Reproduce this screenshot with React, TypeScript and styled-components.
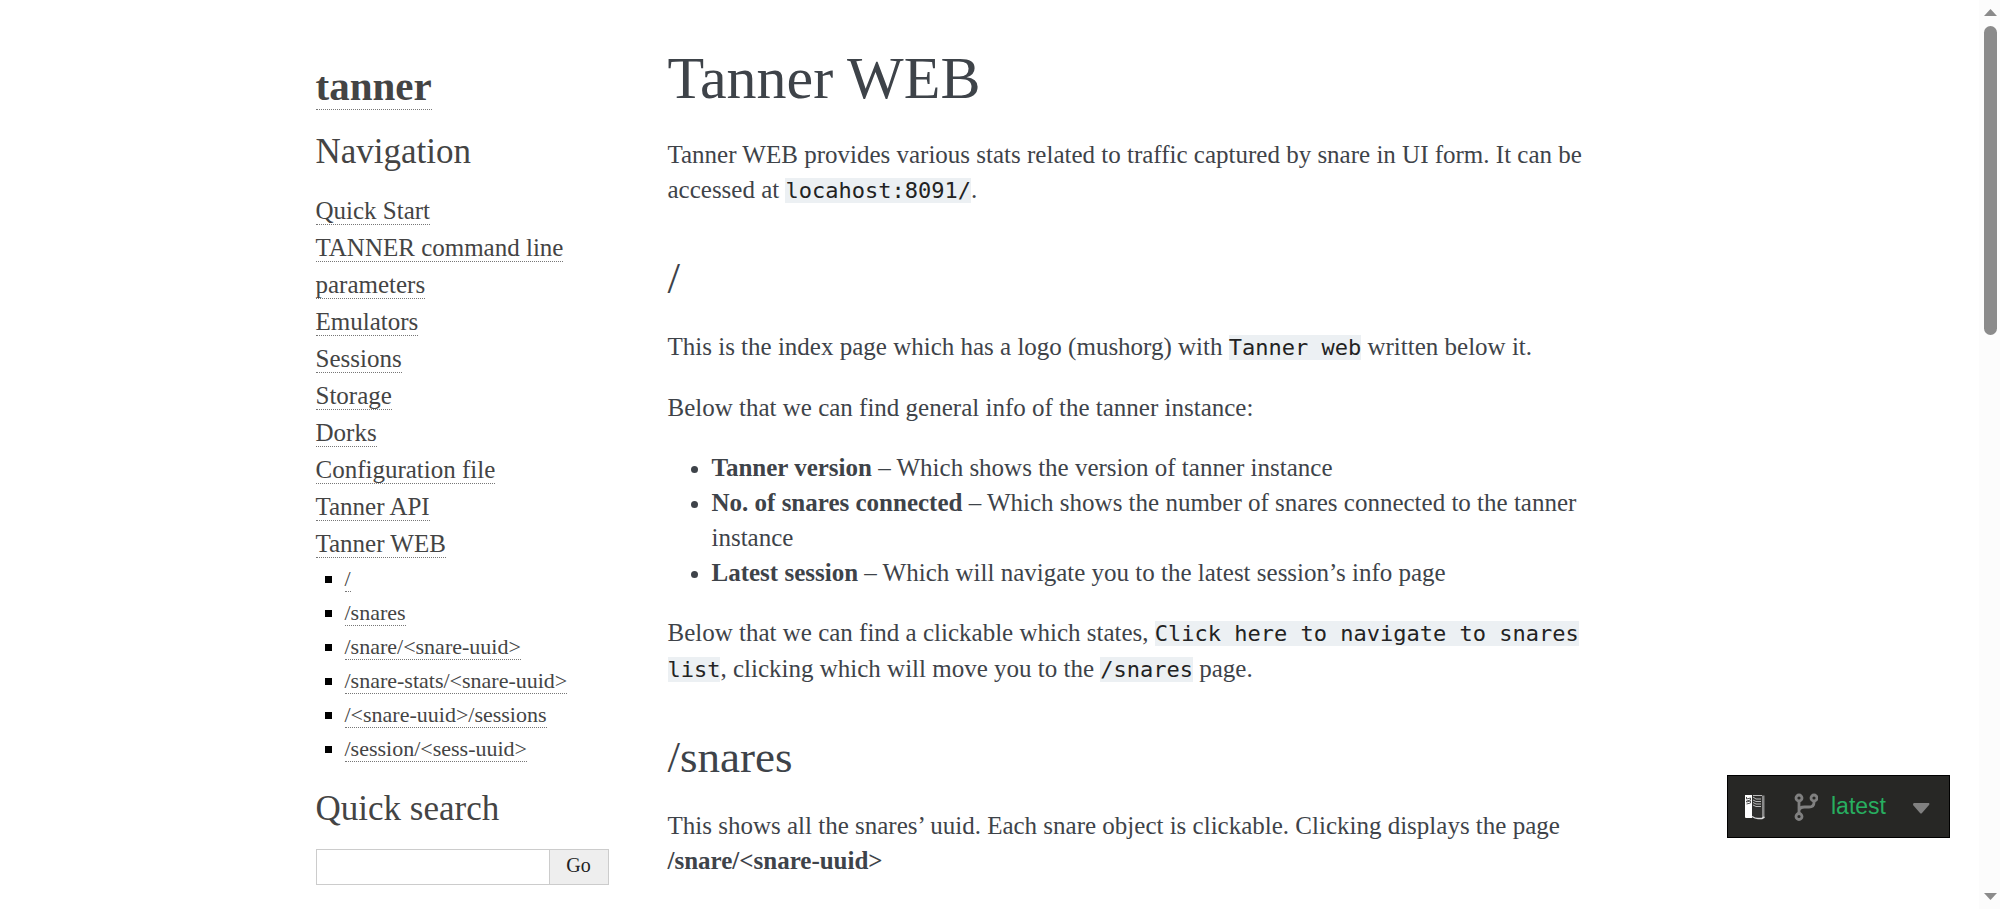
import React from "react";
import styled, { createGlobalStyle } from "styled-components";

const GlobalStyle = createGlobalStyle`
  * { box-sizing: border-box; }
  body {
    margin: 0;
    background: #fff;
    color: #3e4349;
    font-family: "Liberation Serif", Georgia, serif;
    font-size: 25px;
    line-height: 35px;
  }
`;

const Viewport = styled.div`
  height: 100vh;
  overflow: hidden;
  padding-right: 21px;
`;

const Page = styled.div`
  display: flex;
  max-width: 1378px;
  margin: 0 auto;
`;

const Sidebar = styled.aside`
  flex: 0 0 323px;
  padding: 60px 8px 0 15px;
  color: #444;
`;

const SideLink = styled.a`
  color: #444;
  text-decoration: none;
  border-bottom: 1px dotted #777;
`;

const Logo = styled.h1`
  margin: 0 0 17px;
  font-size: 41px;
  line-height: 52px;
  font-weight: 700;
`;

const SideHeading = styled.h3`
  margin: 0 0 17px;
  font-size: 35px;
  line-height: 46px;
  font-weight: 400;
`;

const NavList = styled.ul`
  list-style: none;
  margin: 0;
  padding: 0;
  line-height: 37px;
`;

const SubList = styled.ul`
  list-style: square;
  margin: 0 0 20px;
  padding: 0 0 0 29px;
  color: #000;
  font-size: 22px;
  line-height: 34px;
`;

const SearchForm = styled.form`
  display: flex;
  width: 293px;
  height: 36px;
`;

const SearchInput = styled.input`
  flex: 1;
  min-width: 0;
  border: 1px solid #ccc;
  border-right: 0;
  padding: 0 8px;
  font: 20px "Liberation Serif", serif;
`;

const SearchButton = styled.button`
  width: 60px;
  border: 1px solid #ccc;
  padding: 0 0 4px;
  background: #eee;
  color: #222;
  font: 20px "Liberation Serif", serif;
`;

const Content = styled.main`
  flex: 1;
  min-width: 0;
  padding: 41px 44px 0;
`;

const Title = styled.h1`
  margin: 0 0 22px;
  font-size: 60px;
  line-height: 74px;
  font-weight: 400;
`;

const Heading = styled.h2`
  margin: 39px 0 19px;
  font-size: 45px;
  line-height: 63px;
  font-weight: 400;
`;

const Paragraph = styled.p`
  margin: 0 0 25px;
`;

const BulletList = styled.ul`
  margin: 0 0 25px;
  padding: 0 0 0 44px;
`;

const Code = styled.code`
  background: #ecf0f3;
  color: #222;
  font-family: "DejaVu Sans Mono", monospace;
  font-size: 22px;
`;

const VersionBadge = styled.button`
  position: fixed;
  right: 50px;
  bottom: 71px;
  display: flex;
  align-items: center;
  width: 223px;
  height: 63px;
  padding: 0 19px 0 17px;
  border: 1px solid #000;
  background: #272725;
  color: #27ae60;
  font: 23px "Liberation Sans", Arial, sans-serif;
`;

const BranchIcon = styled.svg`
  margin: 0 13px 0 29px;
`;

const CaretIcon = styled.svg`
  margin: 4px 0 0 auto;
`;

const ScrollTrack = styled.div`
  position: fixed;
  top: 0;
  right: 0;
  bottom: 0;
  width: 21px;
  display: flex;
  flex-direction: column;
  align-items: flex-start;
  justify-content: space-between;
  padding: 9px 3px 9px 5px;
  background: #fcfcfc;
`;

const ScrollThumb = styled.div`
  width: 13px;
  height: 34vh;
  margin: 10px 0 auto;
  border-radius: 7px;
  background: #8b8b8b;
`;

const pages = [
  "Quick Start",
  "TANNER command line parameters",
  "Emulators",
  "Sessions",
  "Storage",
  "Dorks",
  "Configuration file",
  "Tanner API",
  "Tanner WEB",
];

const sections = [
  "/",
  "/snares",
  "/snare/<snare-uuid>",
  "/snare-stats/<snare-uuid>",
  "/<snare-uuid>/sessions",
  "/session/<sess-uuid>",
];

function BookIcon() {
  return (
    <svg width="20" height="26" viewBox="0 0 20 26" aria-hidden="true">
      <path d="M0 1h7v23H1q-1 0-1-1z" fill="#fff" />
      <path d="M7 1h10v21q-5 2-10 0z" fill="#30302e" />
      <path d="M17 1.500h2.500v21l-2.500 2z" fill="#8a8a8a" />
      <path d="M7 22.500q3 2 6 2h4l2.500-1.500" fill="none" stroke="#ddd" strokeWidth="1.500" />
      <path d="M1.500 3v2l4-1v2l-4 1v1l4-1v2l-4 1" fill="none" stroke="#555" strokeWidth="1" />
      <path d="M8 1.500h9M8 3l3 2h5M8 6l3 1.500h5M8 8.500l3 1.500h5M8 11l3 1.500h5" fill="none" stroke="#bbb" strokeWidth="1" />
    </svg>
  );
}

export default function App() {
  return (
    <>
      <GlobalStyle />
      <Viewport>
        <Page>
          <Sidebar>
            <Logo><SideLink href="#">tanner</SideLink></Logo>
            <SideHeading>Navigation</SideHeading>
            <nav>
              <NavList>
                {pages.map((page) => (
                  <li key={page}><SideLink href="#">{page}</SideLink></li>
                ))}
              </NavList>
              <SubList>
                {sections.map((section) => (
                  <li key={section}><SideLink href="#">{section}</SideLink></li>
                ))}
              </SubList>
            </nav>
            <SideHeading id="search-label">Quick search</SideHeading>
            <SearchForm onSubmit={(event) => event.preventDefault()}>
              <SearchInput type="text" aria-labelledby="search-label" />
              <SearchButton type="submit">Go</SearchButton>
            </SearchForm>
          </Sidebar>
          <Content>
            <Title>Tanner WEB</Title>
            <Paragraph>
              Tanner WEB provides various stats related to traffic captured by snare in UI form. It can be
              accessed at <Code>locahost:8091/</Code>.
            </Paragraph>
            <Heading>/</Heading>
            <Paragraph>
              This is the index page which has a logo (mushorg) with <Code>Tanner web</Code> written below it.
            </Paragraph>
            <Paragraph>Below that we can find general info of the tanner instance:</Paragraph>
            <BulletList>
              <li><strong>Tanner version</strong> – Which shows the version of tanner instance</li>
              <li>
                <strong>No. of snares connected</strong> – Which shows the number of snares connected to the tanner
                instance
              </li>
              <li><strong>Latest session</strong> – Which will navigate you to the latest session’s info page</li>
            </BulletList>
            <Paragraph>
              Below that we can find a clickable which states, <Code>Click here to navigate to snares list</Code>,
              clicking which will move you to the <Code>/snares</Code> page.
            </Paragraph>
            <Heading>/snares</Heading>
            <Paragraph>
              This shows all the snares’ uuid. Each snare object is clickable. Clicking displays the page{" "}
              <strong>/snare/&lt;snare-uuid&gt;</strong>
            </Paragraph>
          </Content>
        </Page>
      </Viewport>
      <VersionBadge type="button">
        <BookIcon />
        <BranchIcon width="24" height="28" viewBox="0 0 24 28" fill="none" stroke="#808080" strokeWidth="2.800" aria-hidden="true">
          <circle cx="5" cy="5" r="3" />
          <circle cx="20" cy="5" r="3" />
          <circle cx="5" cy="23.500" r="3" />
          <path d="M5 8v12.500M20 8v1.500q0 4.500-5 4.500h-4.500Q5 14 5 18" />
        </BranchIcon>
        latest
        <CaretIcon width="17" height="11" viewBox="0 0 17 11" aria-hidden="true">
          <path d="M1 0h15q1 1 0 2l-7 8q-1 1-2 0L0 2q0-2 1-2z" fill="#808080" />
        </CaretIcon>
      </VersionBadge>
      <ScrollTrack aria-hidden="true">
        <svg width="13" height="7" viewBox="0 0 13 7"><path d="M0 7L6.500 0L13 7z" fill="#8b8b8b" /></svg>
        <ScrollThumb />
        <svg width="13" height="7" viewBox="0 0 13 7"><path d="M0 0h13L6.500 7z" fill="#8b8b8b" /></svg>
      </ScrollTrack>
    </>
  );
}
